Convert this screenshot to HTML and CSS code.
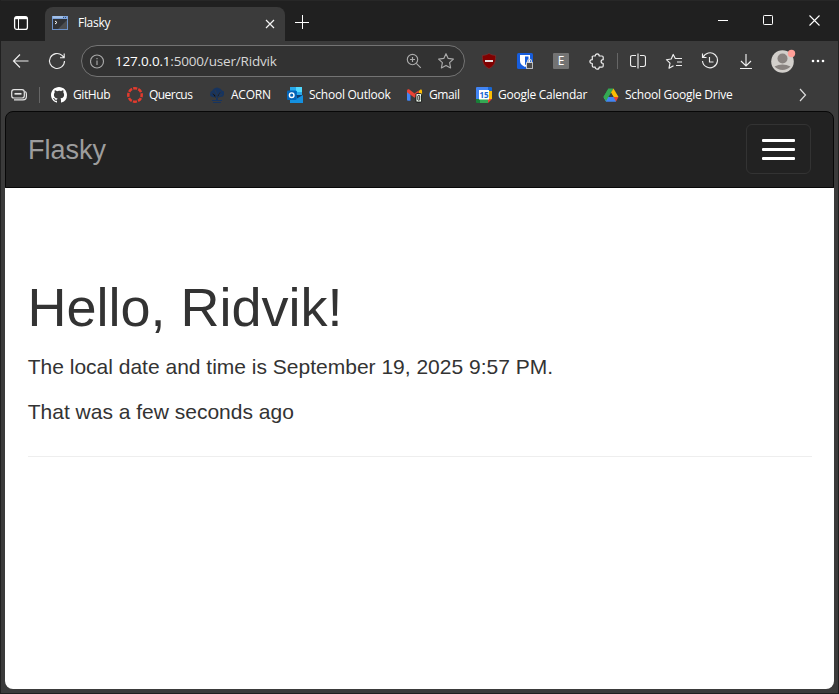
FILE: index.html
```html
<!DOCTYPE html>
<html lang="en">
<head>
<meta charset="utf-8">
<title>Flasky</title>
<link rel="stylesheet" href="styles.css">
</head>
<body>
<div class="window">
  <header class="titlebar">
    <div class="workspaces"><svg width="16" height="16" viewBox="0 0 16 16" fill="none" stroke="#fff"><rect x="1.600" y="1.600" width="12.800" height="12.800" rx="2.200" stroke-width="1.300"/><path d="M2 3h12" stroke-width="2.400"/><path d="M5.500 4v10.500"/></svg></div>
    <div class="tab">
      <svg width="16" height="14" viewBox="0 0 16 14"><rect x=".5" y=".5" width="15" height="13" fill="#303236" stroke="#6b91c9"/><path d="M0 0h16v3H0z" fill="#7fa5dc"/><path d="M1 1h10" stroke="#c6dbf5"/><path d="M11 1.500h1M13 1.500h1" stroke="#334e79"/><path d="M15 4 6 13h9z" fill="#4b4d50"/><path d="m3 5 2 1.500L3 8" fill="none" stroke="#fff"/></svg>
      <span class="tab-title">Flasky</span>
      <svg class="close" width="10" height="10" viewBox="0 0 10 10" stroke="#f4f4f4" stroke-width="1.200"><path d="m1 1 8 8M9 1 1 9"/></svg>
    </div>
    <svg class="new-tab" width="14" height="14" viewBox="0 0 14 14" stroke="#fff"><path d="M7.500 0v14M0 7.500h14"/></svg>
    <div class="controls">
      <svg width="10" height="12" viewBox="0 0 10 12" stroke="#fff"><path d="M0 5.500h10"/></svg>
      <svg width="11" height="11" viewBox="0 0 11 11" fill="none" stroke="#fff"><rect x=".5" y=".5" width="9" height="9" rx=".8"/></svg>
      <svg width="11" height="11" viewBox="0 0 11 11" stroke="#fff" stroke-width="1.100"><path d="m.5.5 10 10M10.500.5l-10 10"/></svg>
    </div>
  </header>

  <nav class="toolbar">
    <span class="tool"><svg width="18" height="16" viewBox="0 0 18 16"><path d="M16.500 8H1.500M8 1.500 1.500 8 8 14.500"/></svg></span>
    <span class="tool"><svg width="18" height="18" viewBox="0 0 18 18"><path d="M16.500 9A7.500 7.500 0 1 1 14 3.400L16 5.500M16.200 1.500v4.200H12"/></svg></span>
    <div class="address">
      <svg width="15" height="15" viewBox="0 0 15 15"><circle cx="7" cy="7.500" r="6.500"/><path d="M7 6.500v4.500M7 4v1.200"/></svg>
      <span class="url"><b>127.0.0.1</b>:5000/user/Ridvik</span>
      <svg class="magnify" width="16" height="16" viewBox="0 0 16 16"><circle cx="6.500" cy="6.500" r="5.200"/><path d="m10.300 10.300 4.500 4.500M6.500 4v5M4 6.500h5"/></svg>
      <svg width="18" height="18" viewBox="0 0 18 18"><path stroke-linejoin="round" d="m9 1.700 2.200 4.700 5.200.7-3.800 3.600 1 5.200L9 13.400l-4.600 2.500 1-5.200L1.600 7.100l5.200-.7z"/></svg>
    </div>
    <span class="tool"><svg width="16" height="16" viewBox="0 0 16 16"><path d="M8 .4c2 1.400 4 1.800 6.600 2 0 6-.5 10-6.600 13.200C1.900 12.400 1.400 8.400 1.400 2.400 4 2.200 6 1.800 8 .4z" fill="#800000" stroke="#7c3030" stroke-width=".7"/><path d="M4 8h8" stroke="#e8dcdc" stroke-width="2"/></svg></span>
    <span class="tool"><svg class="solid" width="16" height="16" viewBox="0 0 16 16"><rect width="16" height="16" rx="1.500" fill="#175ddc"/><path d="M3 2h10v6c0 3-2 4.500-5 6-3-1.500-5-3-5-6z" fill="#fff"/><path d="M8 3.500h3.500V8c0 2-1.500 3-3.500 4z" fill="#175ddc"/><rect x="9" y="9" width="7" height="7" rx="1" fill="#d7d7d7"/><rect x="10" y="10" width="5.200" height="5.200" fill="#4b4b4b"/><path d="M10.500 10V8.500c0-3 4-3 4 0V10" fill="none" stroke="#ccc" stroke-width="1.200"/></svg></span>
    <span class="tool"><span class="extension">E</span></span>
    <span class="tool"><svg width="16" height="17" viewBox="0 0 16 17"><path stroke-linejoin="round" stroke-width="1.200" d="M3.500 3h2.700c0-2.800 4-2.800 4 0H13q1.200 0 1.200 1.200v2.500c-2.800 0-2.800 3.800 0 3.800v2.500q0 1.200-1.200 1.200h-2.800c0 2.600-4 2.600-4 0H4.500q-1.200 0-1.200-1.200v-2.500c-3.200 0-3.200-3.800 0-3.800V3"/></svg></span>
    <i class="divider"></i>
    <span class="tool"><svg width="16" height="16" viewBox="0 0 16 16"><path d="M6 2.500H2.500q-2 0-2 2v7q0 2 2 2H6M10 2.500h3.500q2 0 2 2v7q0 2-2 2H10M8 .5v15"/></svg></span>
    <span class="tool"><svg width="18" height="17" viewBox="0 0 18 17"><path stroke-linejoin="round" d="M10.300 5.500 8.200 1.400 6.200 6l-4.800.7L5 10.200l-1 5 4.500-2.400M10 5.500h7M12 9h5M11 12.500h6"/></svg></span>
    <span class="tool"><svg width="18" height="18" viewBox="0 0 18 18"><path d="M2 5.500A7.500 7.500 0 1 1 1.500 9M1.500 1.500v4h4M8.500 5v5h4"/></svg></span>
    <span class="tool"><svg width="14" height="17" viewBox="0 0 14 17"><path d="M7 1v11.500M2 8l5 5 5-5M1 15.500h12"/></svg></span>
    <span class="tool avatar"><svg class="solid" width="25" height="25" viewBox="0 0 25 25"><circle cx="11.500" cy="13.500" r="11.300" fill="#d2cfcb"/><circle cx="11.500" cy="10.500" r="5" fill="#898380"/><path d="M3.500 18.500q8-4 16 0a11 11 0 0 1-16 0z" fill="#898380"/><circle cx="20.500" cy="5.500" r="3.700" fill="#ff9f98"/></svg></span>
    <span class="tool"><svg class="solid" width="14" height="4" viewBox="0 0 14 4"><g fill="#fff"><circle cx="2" cy="2" r="1.300"/><circle cx="7" cy="2" r="1.300"/><circle cx="12" cy="2" r="1.300"/></g></svg></span>
  </nav>

  <nav class="bookmarks">
    <svg class="saved" width="17" height="12" viewBox="0 0 17 12" fill="none" stroke="#e4e4e4" stroke-width="1.200"><rect x=".7" y=".7" width="12.600" height="8.300" rx="2.300"/><path d="M3.500 4.800h7" stroke-width="1.700"/><path d="M3 10.900h9q3.400 0 3.400-3.400V5q0-1.600-1.200-2.400"/></svg>
    <i class="divider"></i>
    <a class="mark github"><svg width="16" height="16" viewBox="0 0 16 16"><path fill="#fff" d="M8 0C3.580 0 0 3.580 0 8c0 3.540 2.290 6.530 5.470 7.590.4.070.55-.17.55-.38 0-.19-.01-.82-.01-1.490-2.010.37-2.530-.49-2.690-.94-.09-.23-.48-.94-.82-1.130-.28-.15-.68-.52-.01-.53.63-.01 1.080.58 1.230.82.720 1.210 1.870.87 2.330.66.070-.52.280-.87.510-1.070-1.780-.2-3.640-.89-3.640-3.950 0-.87.310-1.590.82-2.150-.08-.2-.36-1.020.08-2.120 0 0 .67-.21 2.200.82A7.700 7.700 0 0 1 8 3.860c.68 0 1.360.09 2 .27 1.530-1.040 2.200-.82 2.200-.82.440 1.100.16 1.920.08 2.120.51.560.82 1.270.82 2.150 0 3.070-1.870 3.750-3.650 3.950.29.250.54.730.54 1.480 0 1.070-.01 1.930-.01 2.200 0 .21.150.46.550.38A8 8 0 0 0 16 8c0-4.420-3.580-8-8-8z"/></svg><span>GitHub</span></a>
    <a class="mark quercus"><svg width="16" height="16" viewBox="0 0 16 16" fill="none"><circle cx="8" cy="8" r="6.700" stroke="#e33b2e" stroke-width="2.500" stroke-dasharray="4.100 1.162" stroke-dashoffset="2.050"/></svg><span>Quercus</span></a>
    <a class="mark acorn"><svg width="16" height="16" viewBox="0 0 16 16"><path fill="#17345f" d="M5 1.500 8 .5l3 1 2 2 2 1v3l-1 2-3 .5-2 .5V13H7v-2.500L3 10 1 8.500 1.500 5 3 4z"/><path stroke="#3b3b3b" stroke-width=".6" d="m3 6 3 2 1 3M6 3l2 5M12 4 9 8l-1 3M13 7l-3 2"/><path stroke="#17345f" d="M3 13.500h10M4 15.500h8"/></svg><span>ACORN</span></a>
    <a class="mark outlook"><svg width="16" height="16" viewBox="0 0 16 16"><path fill="#28a8ea" d="M3 0h12v9H3z"/><path fill="#50d9ff" d="M9 0h6v5H9z"/><path fill="#0078d4" d="M4 4h6v8H4z"/><path fill="#123b6d" d="m9 8 7 0-5 4z"/><path fill="#1490df" d="m3 9 6 3 7-4v8H3z"/><rect y="3.500" width="9.500" height="9.500" rx="1" fill="#0364b8"/><circle cx="4.700" cy="8.200" r="2.300" fill="none" stroke="#fff" stroke-width="1.400"/></svg><span>School Outlook</span></a>
    <a class="mark gmail"><svg width="17" height="16" viewBox="0 0 17 16"><path fill="#4285f4" d="M0 4h3.700v10H1q-1 0-1-1z"/><path fill="#34a853" d="M12.300 6H16v8h-3.700z"/><path fill="#fbbc04" d="M12.300 4 14 2.500c1-.8 2 0 2 1.500v3.500h-3.700z"/><path fill="#ea4335" d="M0 4c0-2 1.500-2.500 2.800-1.500L8 6.500l4.300-3.300v4.600L8 11 3.700 7.800 0 5z"/><rect x="9.500" y="6.500" width="6" height="9" rx="1" fill="#f4fff2" stroke="#111"/><rect x="11.500" y="8.500" width="2" height="5" rx=".6" fill="none" stroke="#111"/></svg><span>Gmail</span></a>
    <a class="mark calendar"><svg width="16" height="16" viewBox="0 0 16 16"><path fill="#4285f4" d="M0 1q0-1 1-1h11v4H4v8H0z"/><path fill="#1967d2" d="M12 0h3q1 0 1 1v3h-4z"/><path fill="#fbbc04" d="M12 4h4v8h-4z"/><path fill="#34a853" d="M4 12h8v4H4z"/><path fill="#188038" d="M0 12h4v4H1q-1 0-1-1z"/><path fill="#ea4335" d="M12 12h4l-4 4z"/><path fill="#fff" d="M3 3h10v9.500H3z"/><text x="8" y="11" text-anchor="middle" class="date">15</text></svg><span>Google Calendar</span></a>
    <a class="mark drive"><svg width="16" height="16" viewBox="0 0 16 16"><path fill="#188038" d="m5.500 1.500 2.500 4-5 9L.5 10z"/><path fill="#34a853" d="M5.500 1.500h5L8 6 3 14.500.5 10z"/><path fill="#fbbc04" d="m10.500 1.500 5 8.500h-5L8 5.500z"/><path fill="#4285f4" d="M3.200 10h9.600L13 14.500H3L.8 10.500z"/><path fill="#34a853" d="M.5 10 5.500 1.500 8 6l-4.800 8.200z"/><path fill="#4285f4" d="M5.500 10h5l2.500 4.500H3z"/><path fill="#3b3b3b" d="m8 6 2.500 4h-5z"/><path fill="#ea4335" d="M10.500 10h5L13 14.500z"/></svg><span>School Google Drive</span></a>
    <svg class="more" width="8" height="14" viewBox="0 0 8 14" fill="none" stroke="#ddd" stroke-width="1.200"><path d="m1 1 5.500 6L1 13"/></svg>
  </nav>

  <main class="page">
    <nav class="navbar"><a class="brand">Flasky</a><button class="toggle" aria-label="Menu"><i></i><i></i><i></i></button></nav>
    <section class="content">
      <h1>Hello, Ridvik!</h1>
      <p>The local date and time is September 19, 2025 9:57 PM.</p>
      <p>That was a few seconds ago</p>
      <hr>
    </section>
  </main>
</div>
</body>
</html>
```
FILE: styles.css
```css
* { box-sizing: border-box; }
body { margin: 0; background: #202020; overflow: hidden; }
svg { display: block; flex: none; }

.window {
  width: 837px;
  height: 693px;
  margin-left: 1px;
  background: #3b3b3b;
  color: #fff;
  font: 12px/16px "Open Sans", "Noto Sans", sans-serif;
}

.titlebar { display: flex; height: 41px; background: #202020; border-top: 1px solid #272727; }
.workspaces { display: flex; width: 44px; padding: 14px 0 0 12px; background: #202020; }
.tab {
  display: flex;
  align-items: center;
  width: 240px;
  height: 34px;
  margin-top: 6px;
  padding: 0 10px 2px 7px;
  background: #3b3b3b;
  border-radius: 8px 8px 0 0;
}
.tab-title { margin-left: 10px; letter-spacing: -.3px; }
.close { margin: 1px 0 0 auto; }
.new-tab { margin: 14px 0 0 10px; }
.controls { display: flex; gap: 35px; margin: 14px 18px 0 auto; }

.toolbar { display: flex; align-items: center; height: 40px; padding-left: 2px; }
.tool { display: grid; place-items: center; flex: none; width: 36px; height: 36px; }
.tool svg, .address svg { fill: none; stroke: #eee; stroke-width: 1.15; }
.tool .solid { stroke: none; }
.address {
  display: flex;
  align-items: center;
  width: 384px;
  height: 32px;
  margin: 0 6px;
  padding: 0 9px 0 8px;
  background: #323232;
  border: 1px solid #747474;
  border-radius: 16px;
}
.address svg { stroke: #aaa; }
.url { margin-left: 10px; font-size: 13.5px; color: #d7d7d7; letter-spacing: -.18px; }
.url b { font-weight: 400; color: #fff; }
.magnify { margin: 0 15px 0 auto; }
.extension { width: 16px; height: 16px; border-radius: 1px; background: #737373; text-align: center; font-size: 12px; }
.divider { flex: none; width: 1px; height: 16px; background: #666; }
.toolbar .divider { margin: 0 2px; }
.avatar { padding: 0 0 2px 2px; }

.bookmarks { display: flex; align-items: center; height: 28px; padding-left: 10px; }
.saved { margin-right: 11px; }
.bookmarks .divider { margin-right: 11px; }
.mark { display: flex; align-items: center; gap: 6px; flex: none; white-space: nowrap; letter-spacing: -.25px; }
.mark svg { width: 16px; overflow: visible; }
.github { width: 76px; letter-spacing: -.4px; }
.quercus { width: 82px; letter-spacing: -.55px; }
.acorn { width: 78px; }
.outlook { width: 120px; }
.gmail { width: 69px; letter-spacing: -.4px; }
.calendar { width: 127px; }
.date { font: bold 8px "Open Sans", sans-serif; fill: #1967d2; letter-spacing: 0; }
.more { margin: 0 31px 0 auto; }

.page {
  width: 829px;
  height: 578px;
  margin: 2px 0 0 4px;
  color: #333;
  font: 21px/30px "Liberation Sans", Arial, sans-serif;
}
.navbar {
  display: flex;
  justify-content: space-between;
  align-items: center;
  height: 77px;
  padding: 0 22px;
  background: #222;
  border: 1px solid #080808;
  border-radius: 8px 8px 0 0;
}
.brand { color: #9d9d9d; font-size: 27px; }
.toggle {
  display: flex;
  flex-direction: column;
  justify-content: center;
  gap: 6px;
  width: 65px;
  height: 50px;
  margin-bottom: 2px;
  padding: 2px 15px 0;
  background: none;
  border: 1px solid #333;
  border-radius: 6px;
}
.toggle i { height: 3px; border-radius: 1px; background: #fff; }
.content {
  height: 501px;
  padding: 90px 22px 0 23px;
  background: #fff;
  border-radius: 0 0 8px 8px;
}
h1 { margin: 0 0 15px -.5px; font-size: 54px; line-height: 59px; font-weight: 500; }
p { margin: 0 0 15px -.3px; }
hr { margin: 29px 0 0; border: 0; border-top: 1px solid #eee; }
```
